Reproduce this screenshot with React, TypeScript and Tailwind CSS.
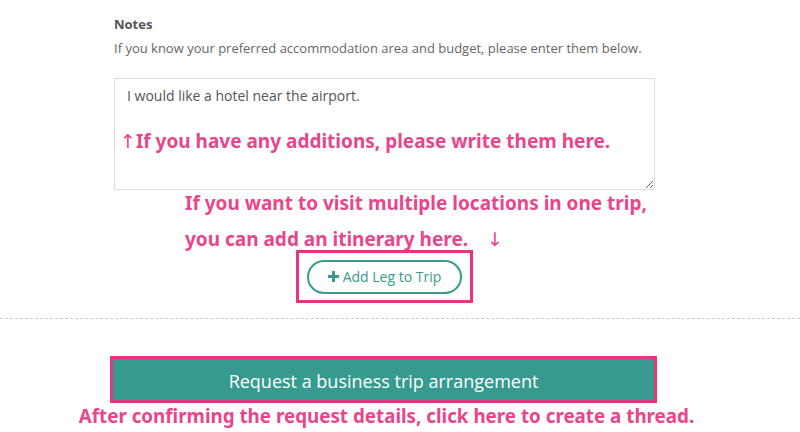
import React from 'react';

const pink = 'text-[#e8468a]';
const arrow = "font-['DejaVu_Sans',sans-serif] font-normal";

const App: React.FC = () => {
  return (
    <div className="w-[800px] h-[432px] overflow-hidden bg-white font-['Open_Sans',sans-serif]">
      <div className="ml-[114px] w-[541px] pt-[14px]">
        <h3 className="text-[13px] font-bold text-[#555] leading-[20px]">Notes</h3>
        <p className="text-[13px] text-[#666] leading-[20px] mt-[4px]">
          If you know your preferred accommodation area and budget, please enter them below.
        </p>

        <div className="relative mt-[20px]">
          <textarea
            className="block w-full h-[112px] border border-[#ddd] px-[12px] py-[6px] text-[14px] leading-[22px] text-[#555] resize-y outline-none"
            defaultValue="I would like a hotel near the airport."
          />
          <p className={`absolute left-[6px] top-[51px] text-[19px] font-bold leading-[24px] ${pink} font-['Noto_Sans',sans-serif]`}>
            <span className={arrow}>↑</span>If you have any additions, please write them here.
          </p>
        </div>

        <div className={`ml-[71px] -mt-[5px] text-[19px] font-bold leading-[36px] ${pink} font-['Noto_Sans',sans-serif]`}>
          <p>If you want to visit multiple locations in one trip,</p>
          <p>
            you can add an itinerary here.<span className="inline-block w-[19px]" />
            <span className={arrow}>↓</span>
          </p>
        </div>

        <div className="flex justify-center -mt-[7px]">
          <div className="border-[3px] border-[#e8347f] w-[177px] h-[53px] flex items-center justify-center">
            <button className="h-[34px] w-[155px] rounded-full border-2 border-[#3a9a90] text-[#3a9a90] text-[14px] flex items-center justify-center gap-[4px]">
              <svg width="11" height="11" viewBox="0 0 11 11">
                <path d="M4 0h3v4h4v3H7v4H4V7H0V4h4z" fill="#3a9a90" />
              </svg>
              Add Leg to Trip
            </button>
          </div>
        </div>
      </div>

      <div className="mt-[15px] border-t border-dashed border-[#ccc]" />

      <div className="ml-[110px] w-[547px] mt-[37px] border-[3px] border-[#e8347f]">
        <button className="w-full h-[41px] pt-[3px] bg-[#379a90] text-white text-[18px]">
          Request a business trip arrangement
        </button>
      </div>
      <p className={`text-center pr-[27px] mt-[1px] text-[18.8px] font-bold leading-[24px] ${pink} font-['Noto_Sans',sans-serif]`}>
        After confirming the request details, click here to create a thread.
      </p>
    </div>
  );
};

export default App;
